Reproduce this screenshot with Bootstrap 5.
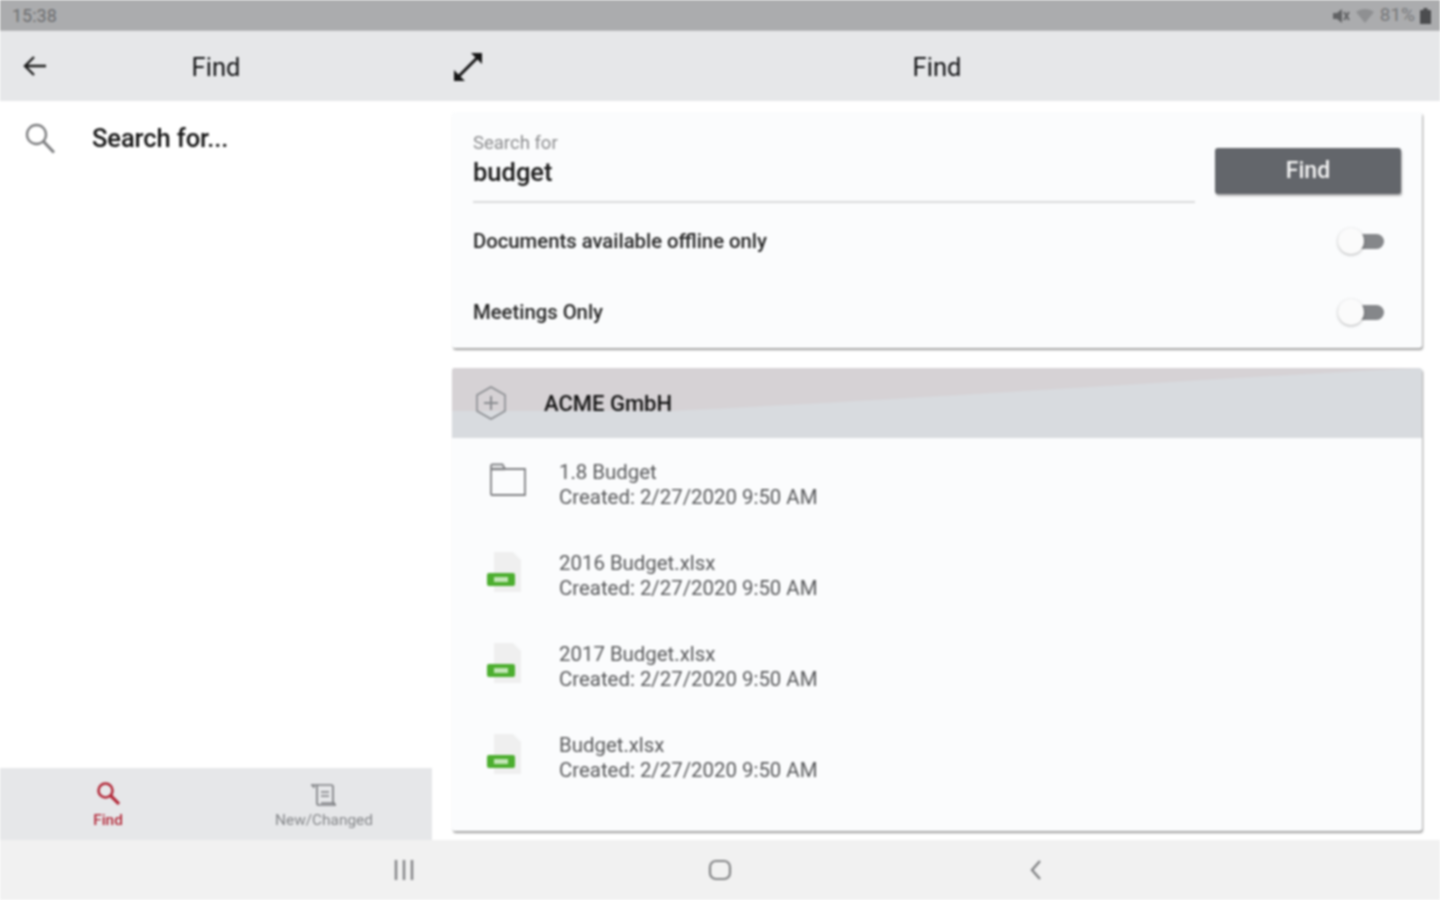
<!DOCTYPE html>
<html lang="en">
<head>
<meta charset="utf-8">
<title>Find</title>
<link href="https://cdn.jsdelivr.net/npm/bootstrap@5.3.0/dist/css/bootstrap.min.css" rel="stylesheet">
<style>
html,body{height:900px;overflow:hidden}
body{font-family:Roboto,"Liberation Sans",sans-serif;background:#fff;color:#1f1f1f}
.app-shell{width:1440px;height:900px;filter:blur(.8px)}
.status-strip{height:31px;background:#abacae;color:#6d6e70;font-size:18px;padding:1px 9px 0 12px;border-bottom:1px solid #b9babc}
.status-right{font-size:19px;gap:5px;color:#77787a}
.title-strip{height:70px;background:#e6e7e9;padding-top:3px}
.title-left{width:432px;padding:0 50px 0 22px;flex:none}
.title-right{width:970px;flex:none;margin-left:20px}
.title-text{font-size:25.500px;font-weight:400;color:#111214;line-height:1}
.back-art{margin-top:-3px}
.expand-art{margin-top:-2px}
.main-area{height:739px}
.left-pane{width:432px;flex:none;background:#fff}
.search-row{padding:22px 0 0 25px;height:667px}
.search-label{font-size:25.500px;font-weight:500;margin-left:37px;line-height:30px;color:#141414;letter-spacing:-.1px}
.tab-strip{height:72px;background:#e6e7e9}
.tab-cell{width:216px;line-height:1;padding-top:13px}
.tab-off{padding-top:15px}
.tab-label{font-size:15.400px;margin-top:8px}
.tab-off .tab-label{margin-top:6px}
.tab-on{color:#b32a3a;font-weight:500}
.tab-off{color:#85878a}
.right-pane{margin-left:20px;width:970px;flex:none;padding-top:11px}
.panel{background:#fbfcfd;box-shadow:1px 2px 2px rgba(0,0,0,.38);border-radius:3px}
.query-panel{height:236px;padding:0 21px;margin-bottom:20px}
.query-row{height:94px;padding-top:20px}
.field-wrap{width:722px;height:71px;border-bottom:2px solid #d9dadb}
.field-label{font-size:18.500px;color:#8b8c8e;line-height:22px}
.field-value{font-size:25.500px;font-weight:500;color:#1a1a1a;line-height:30px;padding-top:3px}
.find-btn{width:186px;height:46px;margin-left:20px;margin-top:16px;background:#63666b;border:0;border-radius:3px;color:#f5f5f5;font-size:23px;font-weight:500;padding:0;box-shadow:1px 2px 2px rgba(0,0,0,.3)}
.option-row{height:71px;font-size:20.300px;font-weight:500;color:#262626}
.mini-switch{width:47px;height:26px;position:relative;flex:none;margin-right:17px;margin-top:-2px}
.mini-switch::before{content:"";position:absolute;left:8px;right:0;top:6px;height:15px;border-radius:8px;background:#85878a}
.mini-switch::after{content:"";position:absolute;left:1px;top:0;width:26px;height:26px;border-radius:50%;background:#fbfbfb;box-shadow:0 1px 3px rgba(0,0,0,.3)}
.result-panel{height:463px;overflow:hidden}
.org-head{height:70px;background:#d8dbdf;position:relative;padding-left:22px;overflow:hidden}
.org-sweep{position:absolute;left:0;top:0;width:100%;height:100%}
.org-name{font-size:22px;font-weight:500;color:#141414;margin-left:36px;position:relative}
.hex-icon{position:relative}
.result-row{height:91px;padding-left:35px}
.doc-icon{width:42px;flex:none}
.doc-text{margin-left:30px;font-size:20.400px;line-height:25px;color:#58595b;margin-top:3px}
.folder-art{display:block;margin:-7px 0 0 2px}
.sheet-art{display:block;margin-top:-6px}
.nav-strip{height:60px;background:#f1f1f1;position:relative}
.nav-slot{width:44px;flex:none}
.nav-icons{padding-left:382px}
.nav-mid{margin-left:272px}
.nav-back{margin-left:272px}
</style>
</head>
<body>
<div class="app-shell d-flex flex-column">
  <div class="status-strip d-flex align-items-center justify-content-between">
    <span>15:38</span>
    <span class="status-right d-flex align-items-center">
      <svg width="18" height="16" viewBox="0 0 18 16"><path d="M1 5h4l5-4v14l-5-4H1z" fill="#626365"/><path d="M12 4l5 8M17 4l-5 8" stroke="#626365" stroke-width="2"/></svg>
      <svg width="20" height="16" viewBox="0 0 20 16"><path d="M1 4c5-4 13-4 18 0l-9 11z" fill="#8f9092"/></svg>
      <span>81%</span>
      <svg width="11" height="16" viewBox="0 0 11 16"><path d="M3.500 0h4v2H10a1 1 0 0 1 1 1v13H0V3a1 1 0 0 1 1-1h2.500z" fill="#4c4d4f"/></svg>
    </span>
  </div>
  <div class="title-strip d-flex align-items-center">
    <div class="title-left d-flex align-items-center">
      <svg class="back-art" width="28" height="24" viewBox="0 0 28 24" fill="none" stroke="#1c1c1c" stroke-width="2.400"><path d="M3 12h21M12 3l-9 9 9 9"/></svg>
      <span class="title-text text-center flex-grow-1">Find</span>
    </div>
    <div class="title-right d-flex align-items-center position-relative">
      <svg class="position-absolute start-0 expand-art" width="32" height="32" viewBox="0 0 32 32" fill="none"><path d="M7 25L25 7" stroke="#161616" stroke-width="3"/><path d="M2 19v11h11zM30 2H19l11 11z" fill="#161616"/></svg>
      <span class="title-text text-center w-100">Find</span>
    </div>
  </div>
  <div class="main-area d-flex">
    <div class="left-pane d-flex flex-column">
      <div class="search-row d-flex align-items-start">
        <svg width="30" height="32" viewBox="0 0 30 32" fill="none" stroke="#7c7d7f" stroke-width="2.300"><circle cx="11.500" cy="11.500" r="9.500"/><path d="M18.500 18.500L29 29.500" stroke-width="3"/></svg>
        <span class="search-label">Search for...</span>
      </div>
      <div class="tab-strip d-flex">
        <div class="tab-cell d-flex flex-column align-items-center tab-on">
          <svg width="24" height="24" viewBox="0 0 24 24" fill="none" stroke="#b32a3a" stroke-width="2.600"><circle cx="9.500" cy="9.500" r="7"/><path d="M14.500 14.500L23 23" stroke-width="3.200"/></svg>
          <span class="tab-label">Find</span>
        </div>
        <div class="tab-cell d-flex flex-column align-items-center tab-off">
          <svg width="28" height="24" viewBox="0 0 28 24" fill="none" stroke="#7d7f82" stroke-width="1.700"><path d="M1 2h20c1 0 2 1 2 2v16M1 2c2 0 3 1 3 3M7 2v18c0 1 1 2 2 2h17c-1 0-2-1-2-2H11"/><path d="M11 9h8M11 13h8" stroke-width="1.300"/></svg>
          <span class="tab-label">New/Changed</span>
        </div>
      </div>
    </div>
    <div class="right-pane d-flex flex-column">
      <div class="panel query-panel">
        <div class="query-row d-flex align-items-start">
          <div class="field-wrap">
            <div class="field-label">Search for</div>
            <div class="field-value">budget</div>
          </div>
          <button type="button" class="btn find-btn">Find</button>
        </div>
        <div class="option-row d-flex align-items-center justify-content-between">
          <span>Documents available offline only</span><span class="mini-switch"></span>
        </div>
        <div class="option-row d-flex align-items-center justify-content-between">
          <span>Meetings Only</span><span class="mini-switch"></span>
        </div>
      </div>
      <div class="panel result-panel">
        <div class="org-head d-flex align-items-center">
          <svg class="org-sweep" viewBox="0 0 970 70" preserveAspectRatio="none"><path d="M0 0H970C760 10 520 28 220 43H0z" fill="#d6d2d5"/></svg>
          <svg class="hex-icon" width="34" height="36" viewBox="0 0 34 36" fill="none" stroke="#8a8c90" stroke-width="1.600"><path d="M17 2l14 8v16l-14 8-14-8V10z"/><path d="M17 11v14M10 18h14" stroke-width="2"/></svg>
          <span class="org-name">ACME GmbH</span>
        </div>
        <div class="result-row d-flex align-items-center">
          <div class="doc-icon"><svg class="folder-art" width="38" height="34" viewBox="0 0 38 34" fill="none" stroke="#7f8083" stroke-width="1.800"><path d="M2 8V3c0-1 .5-1.500 1.500-1.500h10L16 6h20v26H3c-.5 0-1-.5-1-1z" fill="#fbfcfd"/><path d="M2 6h14" stroke-width="2.600"/></svg></div>
          <div class="doc-text"><div>1.8 Budget</div><div>Created: 2/27/2020 9:50 AM</div></div>
        </div>
        <div class="result-row d-flex align-items-center">
          <div class="doc-icon"><svg class="sheet-art" width="38" height="44" viewBox="0 0 38 44"><path d="M7 2h19l8 8v32H7z" fill="#efefef"/><rect y="23" width="28" height="13" rx="2" fill="#4cae2f"/><rect x="7" y="27" width="14" height="5" fill="#c3e6b6"/></svg></div>
          <div class="doc-text"><div>2016 Budget.xlsx</div><div>Created: 2/27/2020 9:50 AM</div></div>
        </div>
        <div class="result-row d-flex align-items-center">
          <div class="doc-icon"><svg class="sheet-art" width="38" height="44" viewBox="0 0 38 44"><path d="M7 2h19l8 8v32H7z" fill="#efefef"/><rect y="23" width="28" height="13" rx="2" fill="#4cae2f"/><rect x="7" y="27" width="14" height="5" fill="#c3e6b6"/></svg></div>
          <div class="doc-text"><div>2017 Budget.xlsx</div><div>Created: 2/27/2020 9:50 AM</div></div>
        </div>
        <div class="result-row d-flex align-items-center">
          <div class="doc-icon"><svg class="sheet-art" width="38" height="44" viewBox="0 0 38 44"><path d="M7 2h19l8 8v32H7z" fill="#efefef"/><rect y="23" width="28" height="13" rx="2" fill="#4cae2f"/><rect x="7" y="27" width="14" height="5" fill="#c3e6b6"/></svg></div>
          <div class="doc-text"><div>Budget.xlsx</div><div>Created: 2/27/2020 9:50 AM</div></div>
        </div>
      </div>
    </div>
  </div>
  <div class="nav-strip d-flex align-items-center nav-icons">
    <div class="nav-slot d-flex justify-content-center"><svg width="24" height="22" viewBox="0 0 24 22" stroke="#828385" stroke-width="2.400"><path d="M4 1v20M12 1v20M20 1v20"/></svg></div>
    <div class="nav-slot nav-mid d-flex justify-content-center"><svg width="24" height="22" viewBox="0 0 24 22" fill="none" stroke="#828385" stroke-width="2.200"><rect x="2" y="2" width="20" height="18" rx="6"/></svg></div>
    <div class="nav-slot nav-back d-flex justify-content-center"><svg width="14" height="22" viewBox="0 0 14 22" fill="none" stroke="#828385" stroke-width="2.400"><path d="M11 2L3 11l8 9"/></svg></div>
  </div>
</div>
</body>
</html>
